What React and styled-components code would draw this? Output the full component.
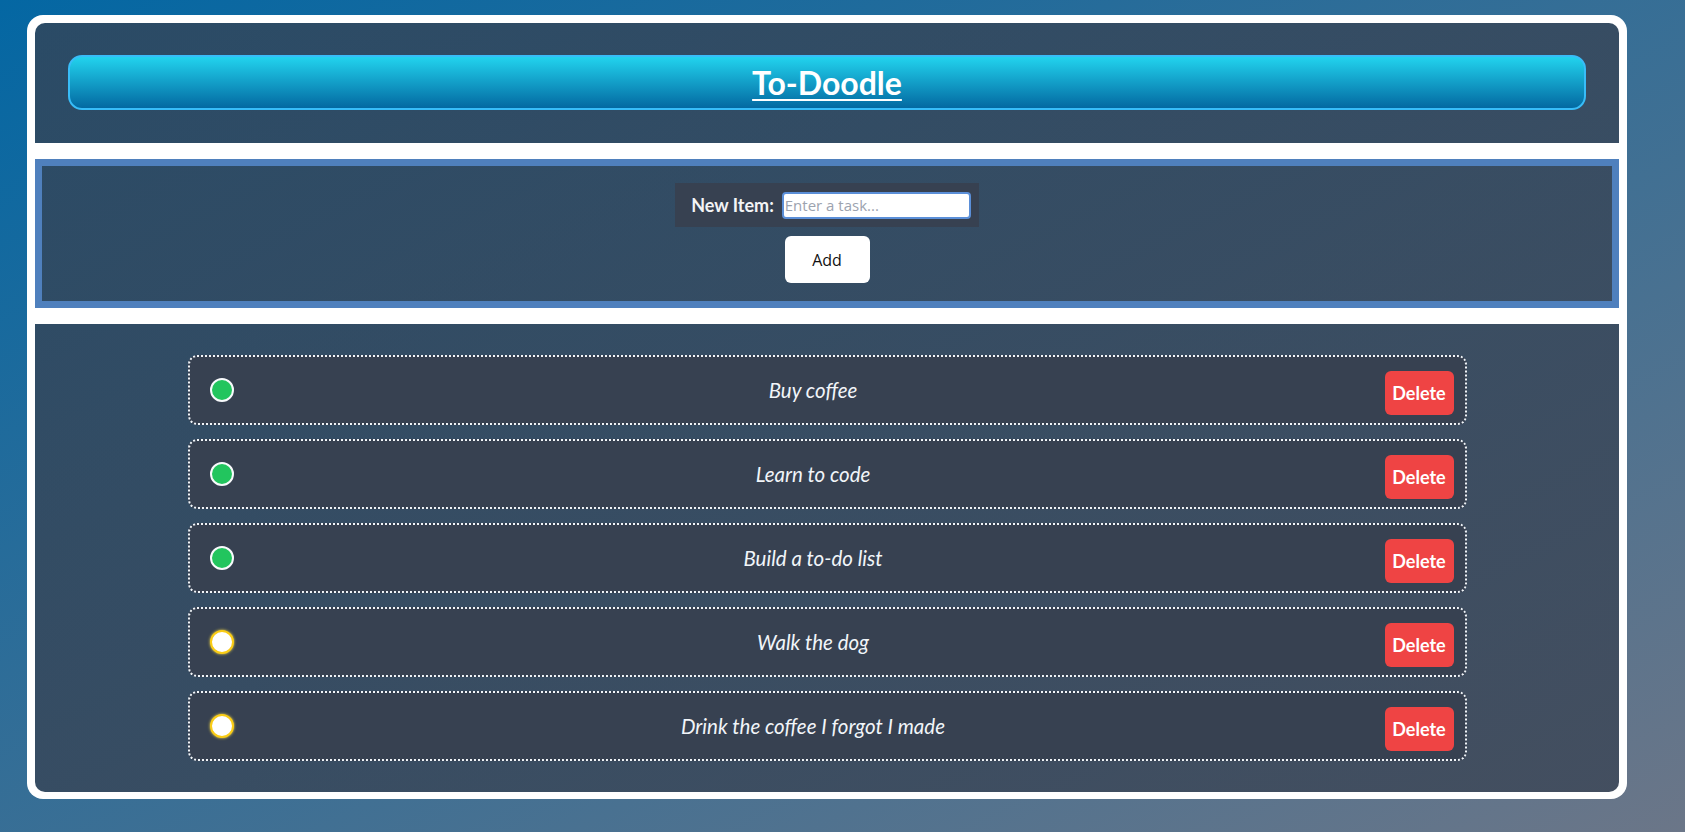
import React, { useState } from 'react';
import styled, { createGlobalStyle } from 'styled-components';

const GlobalStyle = createGlobalStyle`
    html, body {
        margin: 0;
        padding: 0;
    }
    body {
        min-height: 100vh;
        font-family: Lato, 'Liberation Sans', sans-serif;
        background: linear-gradient(to bottom right, #0467a3, #6b7688);
        background-attachment: fixed;
    }
`;

const pageBg = `linear-gradient(rgba(55, 65, 81, 0.74), rgba(55, 65, 81, 0.74)),
    linear-gradient(to bottom right, #0467a3, #6b7688)`;

const initialTodos = [
    { text: 'Buy coffee', done: true },
    { text: 'Learn to code', done: true },
    { text: 'Build a to-do list', done: true },
    { text: 'Walk the dog', done: false },
    { text: 'Drink the coffee I forgot I made', done: false },
];

function App() {
    const [todos, setTodos] = useState(initialTodos);
    const [draft, setDraft] = useState('');

    function addTodo() {
        if (!draft.trim()) return;
        setTodos([...todos, { text: draft.trim(), done: false }]);
        setDraft('');
    }

    function toggle(i) {
        setTodos(todos.map((t, j) => (j === i ? { ...t, done: !t.done } : t)));
    }

    function remove(i) {
        setTodos(todos.filter((_, j) => j !== i));
    }

    return (
        <Page>
            <GlobalStyle />
            <Frame>
                <Header>
                    <Banner>
                        <Title>To-Doodle</Title>
                    </Banner>
                </Header>
                <Entry>
                    <Form onSubmit={(e) => { e.preventDefault(); addTodo(); }}>
                        <Label htmlFor="new-item">New Item:</Label>
                        <Input
                            id="new-item"
                            placeholder="Enter a task..."
                            value={draft}
                            onChange={(e) => setDraft(e.target.value)}
                        />
                    </Form>
                    <AddButton type="button" onClick={addTodo}>Add</AddButton>
                </Entry>
                <ListSection>
                    {todos.map((t, i) => (
                        <Item key={`${t.text}_${i}`}>
                            <Dot done={t.done} onClick={() => toggle(i)} />
                            <ItemText>{t.text}</ItemText>
                            <DeleteButton onClick={() => remove(i)}>Delete</DeleteButton>
                        </Item>
                    ))}
                </ListSection>
            </Frame>
        </Page>
    );
}

export default App;

const Page = styled.div`
    padding: 15px 0 33px 27px;
`;

const Frame = styled.div`
    width: 1600px;
    box-sizing: border-box;
    background: #fff;
    border-radius: 16px;
    padding: 8px 8px 7px 8px;
    display: flex;
    flex-direction: column;
    gap: 16px;
`;

const Section = styled.div`
    background: ${pageBg};
    background-attachment: fixed;
    box-sizing: border-box;
`;

const Header = styled(Section)`
    border-radius: 10px 10px 0 0;
    padding: 32px 33px 33px 33px;
`;

const Banner = styled.div`
    height: 55px;
    box-sizing: border-box;
    border: 2px solid #38bdf8;
    border-radius: 14px;
    background: linear-gradient(to bottom, #22d3ee, #0369a1);
    display: flex;
    align-items: center;
    justify-content: center;
`;

const Title = styled.h1`
    margin: 0;
    color: #fff;
    font-size: 32px;
    font-weight: 700;
    text-decoration: underline;
    text-decoration-thickness: 2px;
    text-underline-offset: 4px;
`;

const Entry = styled(Section)`
    border: 7px solid #4f80bd;
    padding: 17px 0 18px;
    display: flex;
    flex-direction: column;
    align-items: center;
    gap: 9px;
`;

const Form = styled.form`
    display: flex;
    align-items: center;
    gap: 8px;
    height: 44px;
    box-sizing: border-box;
    padding: 0 8px 0 16px;
    background: #374151;
`;

const Label = styled.label`
    color: #f3f4f6;
    font-size: 18px;
    font-weight: 700;
`;

const Input = styled.input`
    width: 189px;
    height: 27px;
    box-sizing: border-box;
    border: 2px solid #5b8fd8;
    border-radius: 4px;
    padding: 0 1px;
    font-family: 'Open Sans', sans-serif;
    font-size: 15px;
    outline: none;
    &::placeholder {
        color: #9ca3af;
    }
`;

const AddButton = styled.button`
    width: 85px;
    height: 47px;
    border: none;
    border-radius: 6px;
    background: #fff;
    color: #111;
    font-family: 'Open Sans', sans-serif;
    font-size: 16px;
    cursor: pointer;
`;

const ListSection = styled(Section)`
    border-radius: 0 0 10px 10px;
    padding: 31px 0 31px;
    display: flex;
    flex-direction: column;
    align-items: center;
    gap: 14px;
`;

const Item = styled.div`
    width: 1279px;
    height: 70px;
    box-sizing: border-box;
    display: flex;
    align-items: center;
    padding: 0 11px 0 20px;
    border: 2px dotted #f1f5f9;
    border-radius: 9px;
    background: #374151;
`;

const Dot = styled.span`
    width: 24px;
    height: 24px;
    box-sizing: border-box;
    border-radius: 50%;
    flex-shrink: 0;
    cursor: pointer;
    background: ${(props) => (props.done ? '#22c55e' : '#fff')};
    border: 2px solid ${(props) => (props.done ? '#f8fafc' : '#facc15')};
    box-shadow: ${(props) => (props.done ? 'none' : '0 0 3px #fde047')};
`;

const ItemText = styled.p`
    flex: 1;
    margin: 0 0 0 8px;
    text-align: center;
    color: #f1f5f9;
    font-size: 20.5px;
    font-style: italic;
`;

const DeleteButton = styled.button`
    width: 69px;
    height: 44px;
    margin-top: 6px;
    border: none;
    border-radius: 6px;
    background: #ef4444;
    color: #fff;
    font-family: Lato, sans-serif;
    font-size: 18px;
    font-weight: 700;
    cursor: pointer;
`;
